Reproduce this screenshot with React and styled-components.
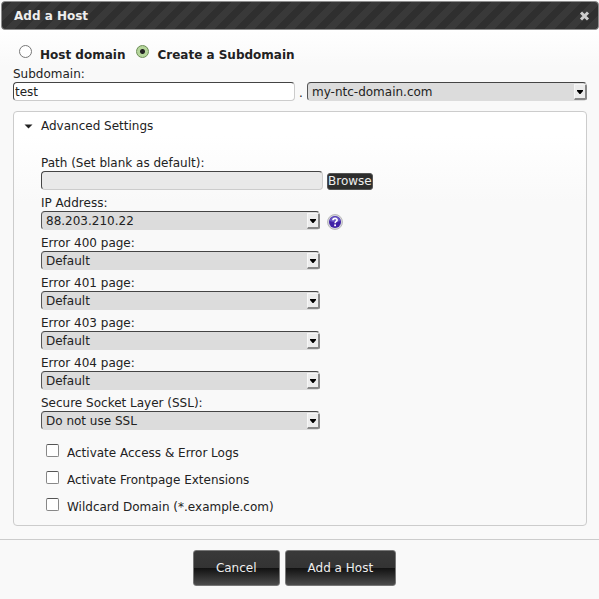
import { useState } from 'react';
import styled, { createGlobalStyle } from 'styled-components';

//===
// Styled
//===

const GlobalStyle = createGlobalStyle`
    *, *::before, *::after {
        box-sizing: border-box;
    }
    body {
        margin: 0;
        background: #f9f9f9;
        color: #222;
        font-family: "DejaVu Sans", Verdana, sans-serif;
        font-size: 12px;
        line-height: 16px;
    }
    button, input, select {
        margin: 0;
        font: inherit;
        color: inherit;
    }
`

const Dialog = styled.div`
    display: flex;
    flex-direction: column;
    padding-top: 1px;
`

const TitleBar = styled.header`
    display: flex;
    align-items: center;
    justify-content: space-between;
    height: 29px;
    margin: 0 0 0 1px;
    padding: 0 8px 0 12px;
    border: 1px solid #8e8e8e;
    border-radius: 4px;
    background: #333 linear-gradient(135deg, #2f2f2f 25%, #393939 25%, #393939 50%, #2f2f2f 50%, #2f2f2f 75%, #393939 75%) 0 0 / 20px 20px;
    color: #eee;
`

const Title = styled.h1`
    margin: 0;
    font-size: 12px;
    font-weight: bold;
`

const CloseButton = styled.button`
    display: flex;
    padding: 0;
    border: 0;
    background: none;
    color: #ccc;
`

const Content = styled.form`
    padding: 13px 12px 13px 13px;
    background: linear-gradient(#fff, #f9f9f9 36px);
`

const RadioRow = styled.div`
    display: flex;
    gap: 11px;
    padding-left: 6px;
    font-weight: bold;
`

const RadioLabel = styled.label`
    display: flex;
    align-items: flex-start;
    gap: 8px;
    line-height: 24px;
`

const Radio = styled.input`
    appearance: none;
    width: 13px;
    height: 13px;
    margin: 2px 0 0;
    border: 1px solid #777;
    border-radius: 50%;
    background: #fff;

    &:checked {
        border-color: #6b8d55;
        background: radial-gradient(circle, #222 0 2px, #b5d59b 3px);
    }
`

const Columns = styled.div`
    display: flex;
    align-items: flex-end;
`

const Field = styled.div`
    display: flex;
    flex-direction: column;
    width: ${({ $wide }) => ($wide ? '282px' : '279px')};
`

const FieldRow = styled.div`
    display: flex;
    align-items: flex-end;
    gap: ${({ $gap }) => $gap || '4px'};
    margin-top: 5px;
`

const Label = styled.label`
    line-height: ${({ $tight }) => ($tight ? '15px' : '16px')};
`

const TextInput = styled.input`
    width: 100%;
    height: 19px;
    padding: 0 1px;
    border: 1px solid #ccc;
    border-top-color: #444;
    border-left-color: #444;
    border-radius: 4px;
    background: ${({ readOnly }) => (readOnly ? '#e9e9e9' : '#fff')};
`

const SelectBox = styled.div`
    position: relative;
    flex: ${({ $grow }) => ($grow ? 1 : 'none')};

    &::after {
        content: '';
        position: absolute;
        top: 2px;
        right: 0;
        width: 13px;
        height: 16px;
        border: 1px solid #f6f6f6;
        border-right: 2px solid #888;
        border-bottom: 2px solid #888;
        border-radius: 0 2px 2px 0;
        background: #ececec;
        pointer-events: none;
    }
`

const StyledSelect = styled.select`
    appearance: none;
    display: block;
    width: 100%;
    height: 19px;
    padding: 0 18px 0 4px;
    border: 1px solid #dcdcdc;
    border-top-color: #444;
    border-left-color: #555;
    border-radius: 4px;
    background: #dcdcdc;
`

const Arrow = styled.svg`
    position: absolute;
    z-index: 1;
    top: 8px;
    right: 4px;
    pointer-events: none;
`

const Dot = styled.span`
    width: 12px;
    padding-left: 4px;
`

const Panel = styled.section`
    margin-top: 10px;
    padding: 6px 27px 5px;
    border: 1px solid #ccc;
    border-radius: 4px;
    background: linear-gradient(#fff 24px, #f9f9f9 90px);
`

const PanelToggle = styled.button`
    display: flex;
    align-items: center;
    gap: 8px;
    margin: 0 0 21px -17px;
    padding: 0;
    border: 0;
    background: none;
`

const BrowseButton = styled.button`
    height: 17px;
    padding: 0;
    border: 1px solid #555;
    border-radius: 3px;
    background: #2d2d2d;
    color: #eee;
    line-height: 15px;
`

const HelpButton = styled.button`
    display: flex;
    padding: 0;
    border: 0;
    background: none;
`

const CheckList = styled.div`
    display: flex;
    flex-direction: column;
    gap: 2px;
    margin-top: 11px;
    padding-left: 5px;
`

const CheckLabel = styled.label`
    display: flex;
    align-items: flex-start;
    gap: 8px;
    line-height: 25px;
`

const Checkbox = styled.input`
    appearance: none;
    width: 13px;
    height: 13px;
    margin: 3px 0 0;
    border: 1px solid #888;
    border-top-color: #555;
    border-radius: 2px;
    background: #fff;

    &:checked {
        background: #555;
        box-shadow: inset 0 0 0 2px #fff;
    }
`

const Footer = styled.footer`
    display: flex;
    justify-content: center;
    gap: 5px;
    padding: 10px 10px 13px 0;
    border-top: 1px solid #ccc;
`

const FooterButton = styled.button`
    height: 36px;
    padding: 0 22px;
    border: 1px solid #777;
    border-radius: 3px;
    background: linear-gradient(#393939, #333 50%, #111 50%, #4c4c4c);
    color: #eee;
`

//===
// Components
//===

const Select = ({ id, options, grow, ...rest }) => {
    return(
        <SelectBox $grow={grow}>
            <StyledSelect id={id} {...rest}>
                {options.map((option) => <option key={option}>{option}</option>)}
            </StyledSelect>
            <Arrow width="6" height="4" viewBox="0 0 6 4">
                <path d="M0 0h6v1L3.5 4h-1L0 1z" fill="#000" />
            </Arrow>
        </SelectBox>
    )
}

const HelpIcon = () => (
    <svg width="16" height="16" viewBox="0 0 16 16">
        <circle cx="8" cy="8" r="7.5" fill="#d4d4dc" stroke="#b0b0b0" strokeWidth="0.8" />
        <circle cx="8" cy="8" r="6" fill="#3f22a6" />
        <path d="M2.5 7a5.6 5.6 0 0 1 11 0q-5.5 2-11 0z" fill="#6754c4" />
        <path d="M5.9 6.2C6 3.7 10.2 3.8 10.1 6.1C10 7.5 8.1 7.5 8.1 9.3" fill="none" stroke="#fff" strokeWidth="1.6" />
        <rect x="7.2" y="10.4" width="1.8" height="1.8" fill="#fff" />
    </svg>
)

const pages = [
    { id: 'error400', label: 'Error 400 page:', options: ['Default'] },
    { id: 'error401', label: 'Error 401 page:', options: ['Default'] },
    { id: 'error403', label: 'Error 403 page:', options: ['Default'] },
    { id: 'error404', label: 'Error 404 page:', options: ['Default'] },
    { id: 'ssl', label: 'Secure Socket Layer (SSL):', options: ['Do not use SSL'] },
]

const extras = [
    'Activate Access & Error Logs',
    'Activate Frontpage Extensions',
    'Wildcard Domain (*.example.com)',
]

const App = () => {
    const [open, setOpen] = useState(true)

    return(
        <>
        <GlobalStyle />
        <Dialog role="dialog" aria-labelledby="title">
            <TitleBar>
                <Title id="title">Add a Host</Title>
                <CloseButton type="button" aria-label="Close">
                    <svg width="11" height="10" viewBox="0 0 11 10">
                        <path d="M2 1.5L9 8.5M9 1.5L2 8.5" stroke="currentColor" strokeWidth="3" />
                    </svg>
                </CloseButton>
            </TitleBar>
            <Content id="host-form" onSubmit={(e) => e.preventDefault()}>
                <RadioRow>
                    <RadioLabel>
                        <Radio type="radio" name="kind" value="host" />
                        Host domain
                    </RadioLabel>
                    <RadioLabel>
                        <Radio type="radio" name="kind" value="subdomain" defaultChecked />
                        Create a Subdomain
                    </RadioLabel>
                </RadioRow>
                <Columns>
                    <Field $wide>
                        <Label htmlFor="subdomain" $tight>Subdomain:</Label>
                        <TextInput id="subdomain" type="text" defaultValue="test" />
                    </Field>
                    <Dot>.</Dot>
                    <Select id="domain" aria-label="Domain" grow options={['my-ntc-domain.com']} />
                </Columns>
                <Panel>
                    <PanelToggle type="button" aria-expanded={open} onClick={() => setOpen(!open)}>
                        <svg width="9" height="5" viewBox="0 0 9 5">
                            <path d="M0.5 0.5h8L4.5 4.5z" fill="#222" />
                        </svg>
                        Advanced Settings
                    </PanelToggle>
                    {open && (
                        <>
                        <FieldRow>
                            <Field $wide>
                                <Label htmlFor="path">Path (Set blank as default):</Label>
                                <TextInput id="path" type="text" readOnly />
                            </Field>
                            <BrowseButton type="button">Browse</BrowseButton>
                        </FieldRow>
                        <FieldRow $gap="7px">
                            <Field>
                                <Label htmlFor="ip">IP Address:</Label>
                                <Select id="ip" options={['88.203.210.22']} />
                            </Field>
                            <HelpButton type="button" aria-label="Help"><HelpIcon /></HelpButton>
                        </FieldRow>
                        {pages.map(({ id, label, options }) => (
                            <FieldRow key={id}>
                                <Field>
                                    <Label htmlFor={id}>{label}</Label>
                                    <Select id={id} options={options} />
                                </Field>
                            </FieldRow>
                        ))}
                        <CheckList>
                            {extras.map((extra) => (
                                <CheckLabel key={extra}>
                                    <Checkbox type="checkbox" />
                                    {extra}
                                </CheckLabel>
                            ))}
                        </CheckList>
                        </>
                    )}
                </Panel>
            </Content>
            <Footer>
                <FooterButton type="button">Cancel</FooterButton>
                <FooterButton type="submit" form="host-form">Add a Host</FooterButton>
            </Footer>
        </Dialog>
        </>
    )
}

export default App
